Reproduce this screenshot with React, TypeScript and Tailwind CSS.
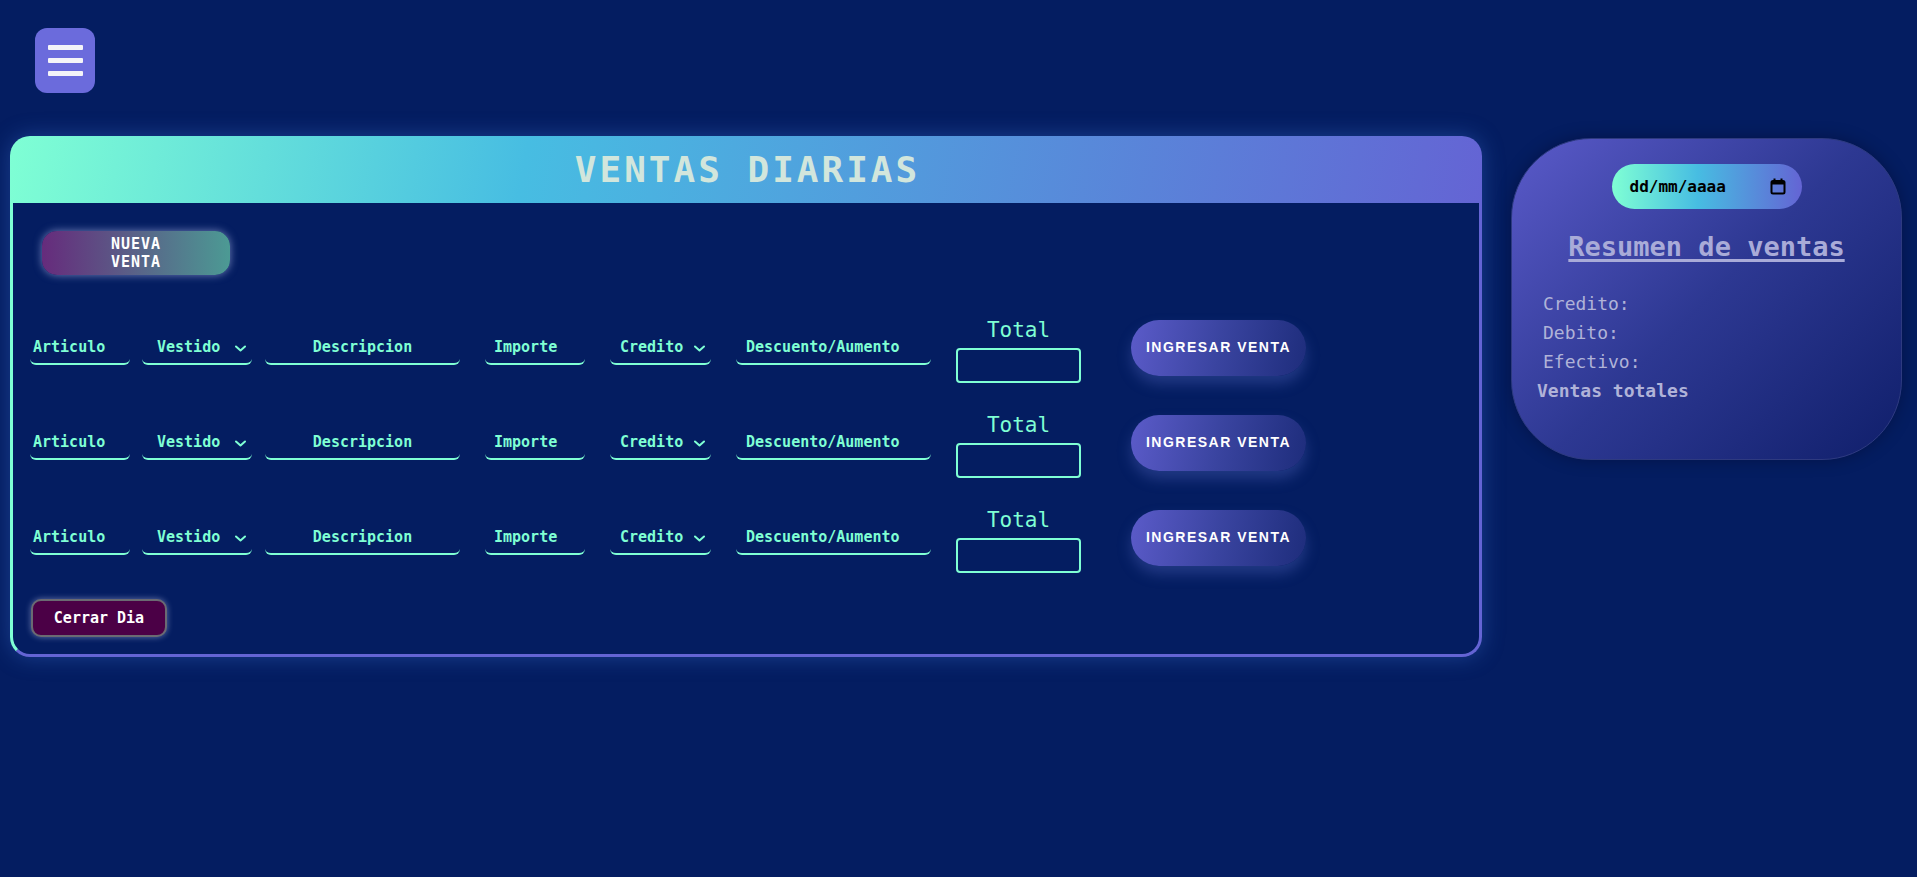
import React from "react"

const mono = "font-['DejaVu_Sans_Mono',monospace]"

function Chevron() {
  return (
    <svg width="11" height="7" viewBox="0 0 11 7" fill="none" className="shrink-0 mt-[3px]">
      <path d="M1 1.5l4.5 4 4.5-4" stroke="#7fffd4" strokeWidth="2" strokeLinecap="round" strokeLinejoin="round" />
    </svg>
  )
}

function Field({ label, className }: { label: string; className: string }) {
  return (
    <div
      className={`h-[30px] pb-[4px] border-b-2 border-[#7fffd4] rounded-b-md flex items-center text-[15px] leading-[18px] font-bold text-[#7fffd4] ${className}`}
    >
      {label}
    </div>
  )
}

function SaleRow() {
  return (
    <div className="h-[95px] flex items-center pl-[17px]">
      <Field label="Articulo" className="w-[100px] pl-[3px]" />
      <div className="ml-[12px] w-[110px] h-[30px] pb-[4px] border-b-2 border-[#7fffd4] rounded-b-md flex items-center justify-between pl-[15px] pr-[6px] text-[15px] leading-[18px] font-bold text-[#7fffd4]">
        <span>Vestido</span>
        <Chevron />
      </div>
      <Field label="Descripcion" className="ml-[13px] w-[195px] justify-center" />
      <Field label="Importe" className="ml-[25px] w-[100px] pl-[9px]" />
      <div className="ml-[25px] w-[101px] h-[30px] pb-[4px] border-b-2 border-[#7fffd4] rounded-b-md flex items-center justify-between pl-[10px] pr-[6px] text-[15px] leading-[18px] font-bold text-[#7fffd4]">
        <span>Credito</span>
        <Chevron />
      </div>
      <Field label="Descuento/Aumento" className="ml-[25px] w-[195px] pl-[10px]" />

      {/* Total */}
      <div className="ml-[25px] w-[125px] flex flex-col items-center">
        <span className="text-[21px] leading-[26px] text-[#7fffd4]">Total</span>
        <div className="mt-[5px] w-[125px] h-[35px] border-2 border-[#7fffd4] rounded-[4px]" />
      </div>

      <button className="ml-[50px] mb-[4px] w-[175px] h-[56px] rounded-full bg-[linear-gradient(100deg,#5b5bc9,#3a44a0_50%,#1e2d7c)] shadow-[0_8px_14px_rgba(90,110,200,0.35)] font-['Liberation_Sans',Arial,sans-serif] font-bold text-[14px] tracking-[1.5px] text-white">
        INGRESAR VENTA
      </button>
    </div>
  )
}

export default function App() {
  return (
    <div className={`min-h-screen bg-[#041d61] pt-[28px] ${mono}`}>
      {/* Menu button */}
      <div className="ml-[35px]">
        <button className="w-[60px] h-[65px] rounded-[12px] bg-[#6b6bdc] flex flex-col items-center justify-center gap-2">
          <span className="block w-[35px] h-[5px] rounded-[1px] bg-[#f4f4f8]" />
          <span className="block w-[35px] h-[5px] rounded-[1px] bg-[#f4f4f8]" />
          <span className="block w-[35px] h-[5px] rounded-[1px] bg-[#f4f4f8]" />
        </button>
      </div>

      <div className="flex items-start mt-[43px] pl-[10px]">
        {/* Ventas diarias card */}
        <div className="w-[1472px] rounded-[20px] shadow-[0_0_22px_rgba(70,130,230,0.35)]">
          <div className="h-[67px] rounded-t-[20px] bg-[linear-gradient(100deg,#7fffd4_0%,#47bde2_35%,#6464d4_100%)] flex items-center justify-center">
            <h1 className="text-[36px] leading-none font-bold tracking-[3px] pl-[3px] text-[#d2e6dc]">VENTAS DIARIAS</h1>
          </div>
          <div className="border-[3px] border-t-0 border-[#6464d4] border-l-[#7fffd4] rounded-b-[20px] pt-[28px] pb-[17px]">
            <div className="pl-[29px]">
              <button className="w-[188px] h-[44px] rounded-[15px] bg-[linear-gradient(to_right,#662b7c,#4c9a94)] shadow-[0_0_9px_rgba(200,210,255,0.55)] text-white font-bold text-[15px] leading-[18px] tracking-[1px] flex items-center justify-center">
                <span className="w-[66px] text-center">NUEVA VENTA</span>
              </button>
            </div>

            <div className="mt-[27px]">
              <SaleRow />
              <SaleRow />
              <SaleRow />
            </div>

            <div className="mt-[12px] pl-[18px]">
              <button className="w-[136px] h-[38px] rounded-[10px] bg-[#4b0046] border-2 border-[#6a6a72] shadow-[0_0_6px_rgba(220,220,255,0.45)] text-white font-bold text-[15px]">
                Cerrar Dia
              </button>
            </div>
          </div>
        </div>

        {/* Resumen card */}
        <div className="ml-[29px] mt-[2px] w-[391px] h-[322px] rounded-[80px] border border-[#2e3a80] bg-[linear-gradient(135deg,#5a5ac9_0%,#2d3892_50%,#101f6b_100%)] shadow-[0_0_16px_rgba(0,0,30,0.35)] flex flex-col items-center pt-[25px]">
          <div className="w-[190px] h-[45px] rounded-full bg-[linear-gradient(to_right,#7fffd4,#47bde2_45%,#6464d4)] flex items-center justify-between pl-[18px] pr-[16px]">
            <span className="text-[16px] font-bold text-black">dd/mm/aaaa</span>
            <svg width="16" height="17" viewBox="0 0 16 17">
              <rect x="1.5" y="3" width="13" height="12.5" rx="1.5" fill="none" stroke="#000" strokeWidth="2" />
              <rect x="1.5" y="3" width="13" height="3.5" fill="#000" />
              <rect x="3.5" y="0.5" width="2" height="3" fill="#000" />
              <rect x="10.5" y="0.5" width="2" height="3" fill="#000" />
            </svg>
          </div>
          <h2 className="mt-[22px] text-[27px] leading-[32px] font-bold text-[#a9abd8] underline underline-offset-[3px] decoration-[3px]">
            Resumen de ventas
          </h2>
          <div className="self-stretch mt-[26px] text-[18px] leading-[29px] text-[#b0b3d8]">
            <p className="pl-[31px]">Credito:</p>
            <p className="pl-[31px]">Debito:</p>
            <p className="pl-[31px]">Efectivo:</p>
            <p className="pl-[25px] font-bold">Ventas totales</p>
          </div>
        </div>
      </div>
    </div>
  )
}
